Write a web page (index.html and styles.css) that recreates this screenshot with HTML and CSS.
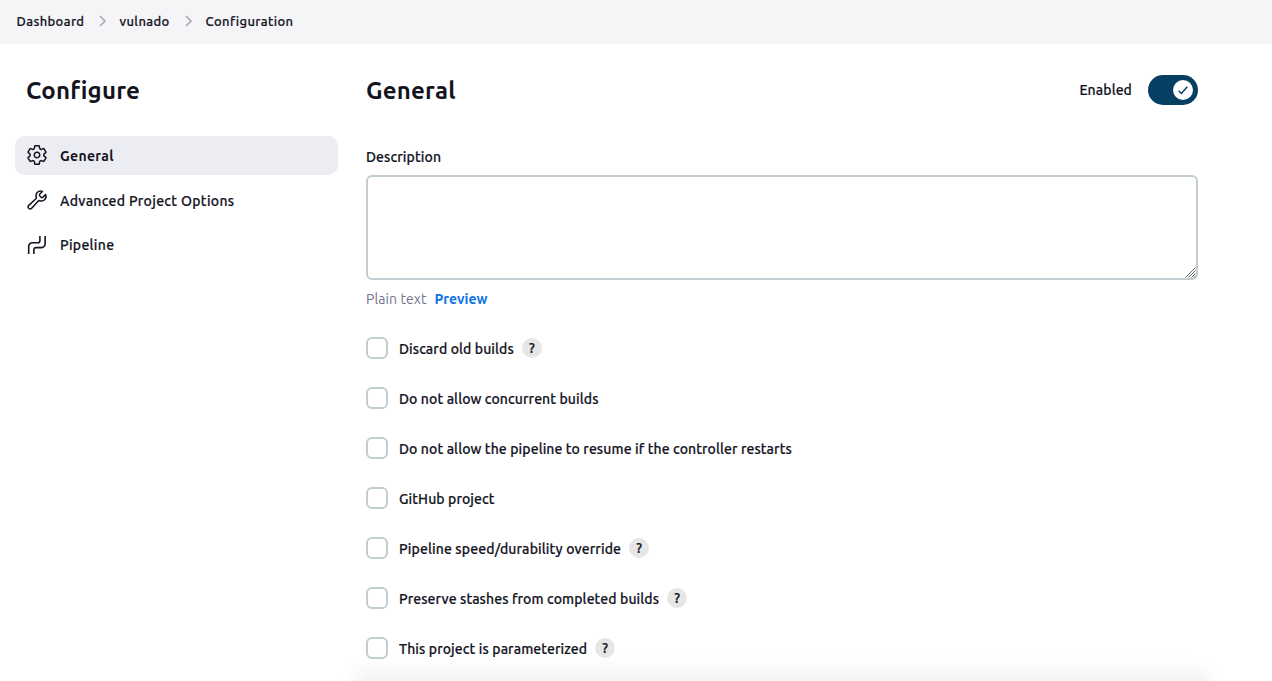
FILE: index.html
```html
<!DOCTYPE html>
<html lang="en">
<head>
<meta charset="utf-8">
<title>Configuration</title>
<link rel="stylesheet" href="styles.css">
</head>
<body>
<nav class="breadcrumbs">
  <span class="crumb crumb-dashboard">Dashboard</span>
  <svg class="chevron" viewBox="0 0 8 12"><path d="M1 1 6 6l-5 5"/></svg>
  <span class="crumb crumb-job">vulnado</span>
  <svg class="chevron" viewBox="0 0 8 12"><path d="M1 1 6 6l-5 5"/></svg>
  <span class="crumb">Configuration</span>
</nav>
<div class="page">
  <aside class="sidebar">
    <h1 class="title">Configure</h1>
    <div class="tasks">
      <a class="task task-active"><svg class="icon icon-gear" viewBox="0 0 512 512"><path d="M262.290 192.310a64 64 0 1057.400 57.400 64.130 64.130 0 00-57.400-57.400zM416.390 256a154.340 154.340 0 01-1.530 20.790l45.210 35.460a10.810 10.810 0 012.450 13.750l-42.770 74a10.810 10.810 0 01-13.140 4.590l-44.900-18.080a16.110 16.110 0 00-15.170 1.750A164.480 164.480 0 01325 400.800a15.940 15.940 0 00-8.820 12.140l-6.730 47.890a11.080 11.080 0 01-10.680 9.170h-85.540a11.110 11.110 0 01-10.690-8.870l-6.720-47.820a16.070 16.070 0 00-9-12.220 155.300 155.300 0 01-21.460-12.570 16 16 0 00-15.110-1.710l-44.890 18.070a10.810 10.810 0 01-13.140-4.580l-42.770-74a10.800 10.800 0 012.450-13.750l38.210-30a16.050 16.050 0 006-14.080c-.36-4.170-.58-8.330-.58-12.500s.21-8.270.58-12.350a16 16 0 00-6.070-13.940l-38.190-30A10.810 10.810 0 0149.480 186l42.770-74a10.810 10.810 0 0113.140-4.590l44.900 18.080a16.110 16.110 0 0015.170-1.750A164.480 164.480 0 01187 111.200a15.940 15.940 0 008.820-12.140l6.730-47.890A11.080 11.080 0 01213.230 42h85.540a11.110 11.110 0 0110.690 8.870l6.720 47.820a16.070 16.070 0 009 12.220 155.300 155.300 0 0121.460 12.570 16 16 0 0015.110 1.710l44.890-18.070a10.810 10.810 0 0113.140 4.580l42.770 74a10.800 10.800 0 01-2.450 13.750l-38.210 30a16.050 16.050 0 00-6.050 14.080c.33 4.140.55 8.300.55 12.470z"/></svg><span>General</span></a>
      <a class="task"><svg class="icon" viewBox="0 0 512 512"><path d="M393.870 190a32.100 32.100 0 01-45.250 0l-26.570-26.570a32.090 32.090 0 010-45.260L382.190 58a1 1 0 00-.3-1.640c-38.820-16.640-89.150-8.160-121.110 23.570-30.580 30.350-32.320 76-21.120 115.840a31.930 31.930 0 01-9.060 32.080L64 380a48.170 48.170 0 1068 68l153.860-167a31.930 31.930 0 0131.600-9.130c39.540 10.590 84.540 8.600 114.720-21.190 32.490-32 39.500-88.560 23.750-120.930a1 1 0 00-1.600-.26z"/></svg><span class="task-text">Advanced Project Options</span></a>
      <a class="task"><svg class="icon icon-pipe" viewBox="0 0 22 22"><path d="M2.700 20v-7.600a3.600 3.600 0 0 1 3.600-3.600h5.600a2 2 0 0 0 2-2V2M7.900 20v-4.400a2 2 0 0 1 2-2h5.600a3.600 3.600 0 0 0 3.600-3.600V2"/></svg><span>Pipeline</span></a>
    </div>
  </aside>
  <main class="content">
    <header class="heading">
      <h2 class="title">General</h2>
      <div class="enabled"><span>Enabled</span><span class="toggle"><span class="knob"><svg class="check" viewBox="0 0 20 20"><path d="m5.700 10.800 2.700 2.700 5.900-6.700"/></svg></span></span></div>
    </header>
    <label class="label">Description</label>
    <div class="field">
      <textarea class="description"></textarea>
      <svg class="grip" viewBox="0 0 11 11"><path d="M.5 10.500l10-10M3.500 10.500l7-7M6.500 10.500l4-4M9 10.500l1.500-1.500"/></svg>
    </div>
    <div class="hint"><span class="plain">Plain text</span><a class="preview">Preview</a></div>
    <div class="options">
      <div class="option"><span class="box"></span><span class="option-text">Discard old builds</span><span class="help">?</span></div>
      <div class="option"><span class="box"></span><span class="option-text">Do not allow concurrent builds</span></div>
      <div class="option"><span class="box"></span><span class="option-text">Do not allow the pipeline to resume if the controller restarts</span></div>
      <div class="option"><span class="box"></span><span class="option-text">GitHub project</span></div>
      <div class="option"><span class="box"></span><span class="option-text option-durability">Pipeline speed/durability override</span><span class="help">?</span></div>
      <div class="option"><span class="box"></span><span class="option-text">Preserve stashes from completed builds</span><span class="help">?</span></div>
      <div class="option"><span class="box"></span><span class="option-text">This project is parameterized</span><span class="help">?</span></div>
    </div>
    <div class="bottom-bar"></div>
  </main>
</div>
</body>
</html>
```
FILE: styles.css
```css
* { box-sizing: border-box; }
html { overflow: hidden; }
body {
  margin: 0;
  height: 681px;
  overflow: hidden;
  display: flex;
  flex-direction: column;
  background: #fff;
  color: #14141f;
  font: 500 14px/20px "Ubuntu", "Noto Sans", sans-serif;
  letter-spacing: 0.1px;
  -webkit-text-stroke: 0.2px;
}
.breadcrumbs {
  flex: none;
  height: 44px;
  padding: 0 0 2px 16.500px;
  display: flex;
  align-items: center;
  background: #f5f5f8;
  font-size: 13px;
  letter-spacing: 0.38px;
}
.crumb { white-space: nowrap; }
.crumb-dashboard { width: 67px; }
.crumb-job { width: 50px; }
.chevron {
  width: 8px;
  height: 12px;
  margin: 0 13px 0 15px;
  fill: none;
  stroke: #a7a7b8;
  stroke-width: 1.600;
}
.page { display: flex; flex: 1; min-height: 0; }
.sidebar { width: 338px; padding: 31px 0 0 15px; margin-right: 28px; flex: none; }
.title { margin: 0; font-size: 24px; line-height: 32px; font-weight: 700; letter-spacing: 0.2px; -webkit-text-stroke: 0; }
.sidebar .title { padding-left: 11px; }
.tasks { display: flex; flex-direction: column; gap: 5.500px; margin-top: 29px; }
.task {
  height: 39px;
  padding-left: 11px;
  display: flex;
  align-items: center;
  gap: 12px;
  border-radius: 10px;
  white-space: nowrap;
  letter-spacing: 0.32px;
}
.task-active { background: #ecedf3; font-weight: 700; -webkit-text-stroke: 0; }
.task-text { padding-top: 1px; }
.icon { width: 22px; height: 22px; fill: none; stroke: #14141f; stroke-width: 35; stroke-linejoin: round; stroke-linecap: round; }
.icon-gear { margin-bottom: 1px; }
.icon-pipe { stroke-width: 1.600; stroke-linecap: butt; }
.content { width: 832px; padding-top: 31px; }
.heading { display: flex; justify-content: space-between; align-items: center; height: 32px; }
.enabled { display: flex; align-items: center; gap: 16px; margin-bottom: 2px; }
.toggle { width: 50px; height: 30px; padding: 5px; border-radius: 15px; background: #063f62; display: flex; justify-content: flex-end; }
.knob { width: 20px; height: 20px; border-radius: 50%; background: #fff; }
.check { display: block; width: 20px; height: 20px; fill: none; stroke: #063f62; stroke-width: 1.500; }
.label { display: block; margin-top: 40px; }
.field { position: relative; margin-top: 8px; }
.description {
  display: block;
  width: 832px;
  height: 105px;
  margin: 0;
  border: 2px solid #c1cdd1;
  border-radius: 6px;
  resize: none;
}
.grip { position: absolute; right: 2px; bottom: 2px; width: 11px; height: 11px; fill: none; stroke: #666; stroke-width: 1; }
.hint { display: flex; gap: 8px; margin-top: 9px; white-space: nowrap; }
.plain { color: #73738c; font-weight: 400; width: 60.500px; -webkit-text-stroke: 0; }
.preview { color: #0b74e5; font-weight: 700; letter-spacing: 0; -webkit-text-stroke: 0; }
.options { display: flex; flex-direction: column; gap: 28px; margin-top: 28px; }
.option { height: 22px; display: flex; align-items: center; white-space: nowrap; }
.option-text { padding-top: 2px; }
.option-durability { letter-spacing: 0.14px; }
.box { width: 22px; height: 22px; margin-right: 11px; border: 2px solid #c1cdd1; border-radius: 6px; }
.help { width: 20px; height: 20px; margin-left: 8px; border-radius: 50%; background: #e6e6e6; text-align: center; font-size: 14px; letter-spacing: 0; }
.bottom-bar { height: 60px; margin: 22px 0 0; box-shadow: 0 0 20px 10px rgba(0, 0, 0, 0.06); }
```
